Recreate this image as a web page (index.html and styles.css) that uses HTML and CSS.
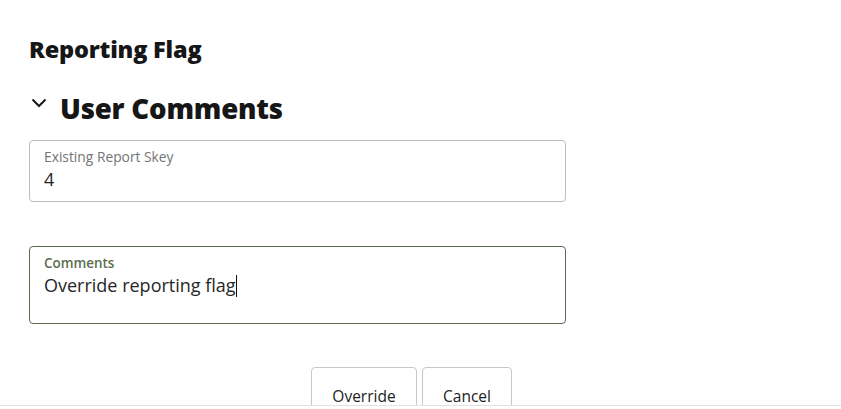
FILE: index.html
```html
<!DOCTYPE html>
<html lang="en">
<head>
<meta charset="utf-8">
<title>Reporting Flag</title>
<link rel="stylesheet" href="styles.css">
</head>
<body>
<div class="page">
  <h2 class="title">Reporting Flag</h2>
  <div class="section-head">
    <svg class="chevron" width="16" height="10" viewBox="0 0 16 10"><path d="M1.5 1.5 L8 8 L14.5 1.5" fill="none" stroke="#1a1a1a" stroke-width="2"/></svg>
    <h3 class="section-title">User Comments</h3>
  </div>
  <div class="field">
    <div class="field-label">Existing Report Skey</div>
    <div class="field-value">4</div>
  </div>
  <div class="field field-focus">
    <div class="field-label">Comments</div>
    <div class="field-value">Override reporting flag<span class="caret"></span></div>
  </div>
  <div class="actions">
    <button class="btn btn-override">Override</button>
    <button class="btn btn-cancel">Cancel</button>
  </div>
</div>
</body>
</html>
```
FILE: styles.css
```css
html, body {
  margin: 0;
  padding: 0;
  background: #fff;
}
body {
  font-family: "Open Sans", "Noto Sans", sans-serif;
  color: #161616;
}
.page {
  height: 406px;
  overflow: hidden;
  border-bottom: 1px solid #e3e3e3;
  padding: 0 0 0 29px;
  box-sizing: border-box;
}
.title {
  margin: 0;
  padding-top: 33px;
  font-size: 23.5px;
  line-height: 32px;
  font-weight: 800;
  letter-spacing: -0.2px;
}
.section-head {
  display: flex;
  align-items: flex-start;
  margin-top: 23px;
  height: 40px;
}
.chevron {
  margin-left: 2px;
  margin-right: 13px;
  margin-top: 10px;
  flex: none;
}
.section-title {
  margin: 0;
  font-size: 27.6px;
  line-height: 40px;
  font-weight: 800;
  letter-spacing: -0.2px;
}
.field {
  width: 537px;
  box-sizing: border-box;
  border: 1px solid #bdbdbd;
  border-radius: 4px;
  padding: 7px 14px 0;
  height: 62px;
  margin-top: 12px;
}
.field-label {
  font-size: 13.8px;
  line-height: 18px;
  color: #747474;
}
.field-value {
  font-size: 18px;
  line-height: 26px;
  color: #262626;
}
.field-focus {
  margin-top: 44px;
  height: 78px;
  border-color: #5a6b4d;
}
.field-focus .field-label {
  color: #5b6e50;
  font-weight: 600;
  font-size: 13.4px;
}
.caret {
  display: inline-block;
  width: 1px;
  height: 22px;
  background: #111;
  vertical-align: -5px;
}
.actions {
  display: flex;
  gap: 5px;
  margin-top: 43px;
  margin-left: 282px;
}
.btn {
  font-family: inherit;
  font-size: 15.5px;
  line-height: 16px;
  color: #222;
  background: #fff;
  border: 1px solid #c8c8c8;
  border-radius: 4px;
  height: 60px;
  padding: 0 0 2px;
  box-sizing: border-box;
  display: flex;
  align-items: center;
  justify-content: center;
}
.btn-override {
  width: 106px;
}
.btn-cancel {
  width: 90px;
}
```
